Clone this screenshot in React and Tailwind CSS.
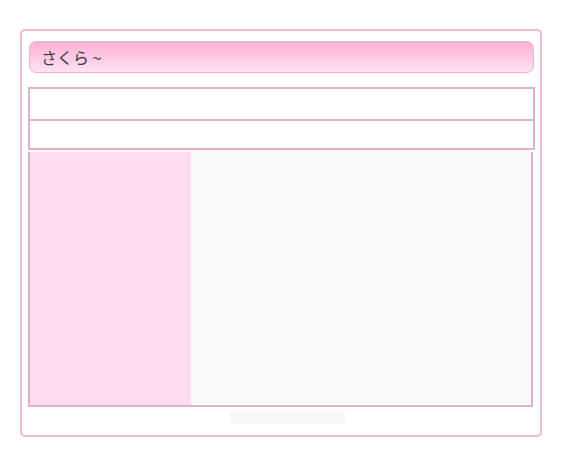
// Sakura themed panel

export default function App() {
  return (
    <div className="w-[563px] h-[470px] bg-white pt-[29px] pl-[20px] font-['Noto_Sans_CJK_JP',sans-serif]">
      <div className="w-[522px] h-[408px] border-2 border-[#e8bcd9] rounded-[5px] pl-[6px] pt-[10px] flex flex-col">
        {/* Header */}
        <div className="ml-[1px] w-[505px] h-[32px] rounded-[7px] border border-[#efb2d3] bg-gradient-to-b from-[#ffb0d8] to-[#ffe2f1] flex items-center pl-[11px] text-[16px] text-[#383838]">
          さくら ~
        </div>

        {/* Rows */}
        <div className="mt-[14px] w-[507px] border-2 border-[#dcb2cc] flex flex-col">
          <div className="h-[32px] bg-white border-b-2 border-[#dcb2cc]"></div>
          <div className="h-[27px] bg-white"></div>
        </div>

        {/* Content */}
        <div className="mt-[2px] w-[505px] h-[255px] border-x-2 border-b-2 border-[#dcb2cc] flex">
          <div className="w-[161px] bg-[#ffdcf0]"></div>
          <div className="flex-1 bg-[#f9f9f9]"></div>
        </div>

        {/* Footer */}
        <div className="mt-[4px] ml-[202px] w-[115px] h-[12px] bg-[#f8f8f8]"></div>
      </div>
    </div>
  );
}
